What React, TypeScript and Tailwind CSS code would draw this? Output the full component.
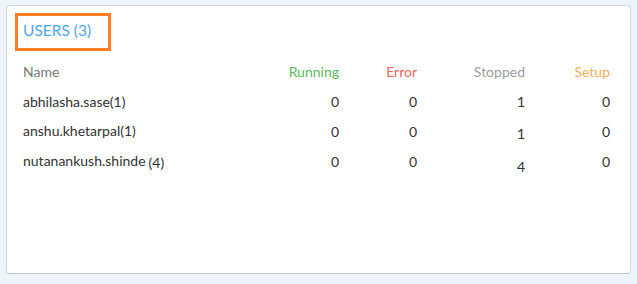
import React from "react";

type Row = {
  name: string;
  count: string;
  gap: boolean;
  vals: [number, number, number, number];
  namePt: string;
  valPt: string;
  stopPt: string;
};

const rows: Row[] = [
  { name: "abhilasha.sase", count: "(1)", gap: false, vals: [0, 0, 1, 0], namePt: "pt-[10px]", valPt: "pt-[10px]", stopPt: "pt-[10px]" },
  { name: "anshu.khetarpal", count: "(1)", gap: false, vals: [0, 0, 1, 0], namePt: "pt-[9px]", valPt: "pt-[10px]", stopPt: "pt-[12px]" },
  { name: "nutanankush.shinde", count: "(4)", gap: true, vals: [0, 0, 4, 0], namePt: "pt-[9px]", valPt: "pt-[10px]", stopPt: "pt-[15px]" },
];

export default function App() {
  return (
    <div
      className="w-[637px] h-[284px] bg-[#edf4fc] pt-[5px] pl-[6px]"
      style={{ fontFamily: "Lato, 'Open Sans', sans-serif" }}
    >
      <div className="w-[625px] h-[269px] bg-white border border-[#d3d6da] border-b-[#bfc2c6] rounded-[4px] pl-[8px] pr-[21px] pt-[7px]">
        <div className="w-[96px] h-[38px] border-[3px] border-[#ff7f27] flex items-center pl-[5px] pb-[2px]">
          <span className="text-[15.5px] text-[#4ea8ea] leading-none">USERS (3)</span>
        </div>
        <div className="pl-[8px] mt-[11px] text-[14px] leading-[20px]">
          <div className="grid grid-cols-[236px_80px_78px_108px_85px] h-[20px]">
            <div className="text-[#777]">Name</div>
            <div className="text-right text-[#5cb85c]">Running</div>
            <div className="text-right text-[#f0675c]">Error</div>
            <div className="text-right text-[#9d9d9d]">Stopped</div>
            <div className="text-right text-[#ffad5e]">Setup</div>
          </div>
          {rows.map((r) => (
            <div
              key={r.name}
              className="grid grid-cols-[236px_80px_78px_108px_85px] text-[#333] items-start h-[30px]"
            >
              <div className={r.namePt}>
                {r.name}
                {r.gap ? (
                  <span className="ml-[3px] relative top-[2px]">{r.count}</span>
                ) : (
                  <span>{r.count}</span>
                )}
              </div>
              <div className={`text-right ${r.valPt}`}>{r.vals[0]}</div>
              <div className={`text-right ${r.valPt}`}>{r.vals[1]}</div>
              <div className={`text-right ${r.stopPt}`}>{r.vals[2]}</div>
              <div className={`text-right ${r.valPt}`}>{r.vals[3]}</div>
            </div>
          ))}
        </div>
      </div>
    </div>
  );
}
